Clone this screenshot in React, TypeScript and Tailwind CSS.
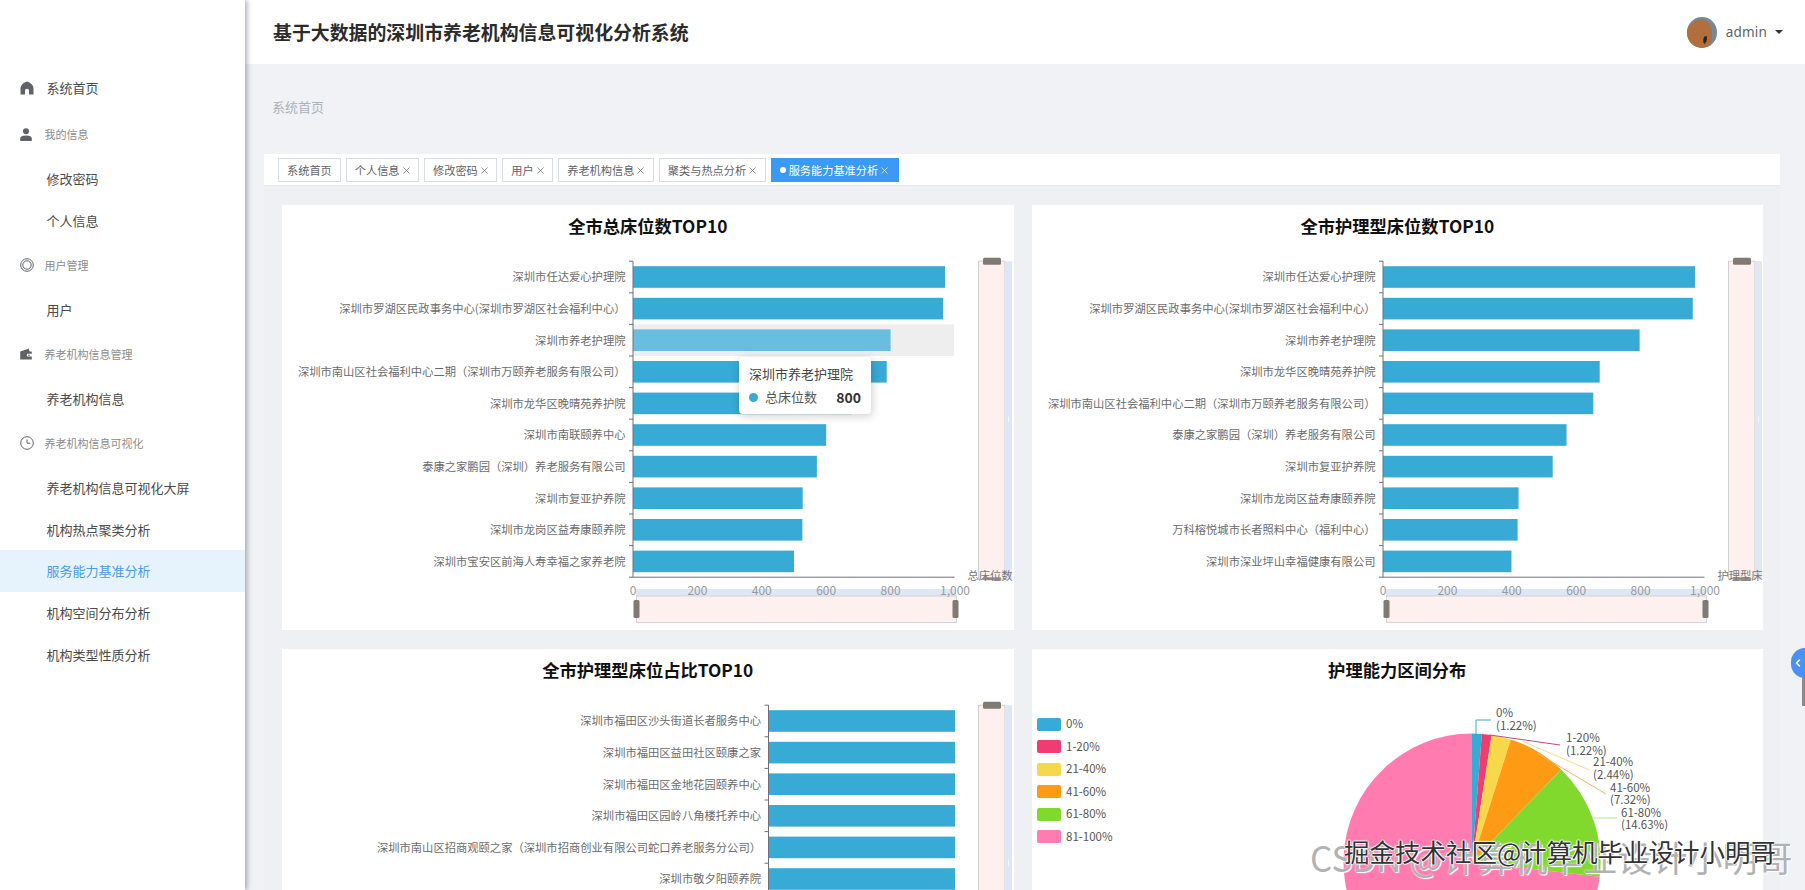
import React from "react";
import { ChevronLeft, X } from "lucide-react";

const AXIS_COLOR = "#6e7079";
const BAR = "#38aad6";

const chartOne: [string, number][] = [
  ["深圳市任达爱心护理院", 969],
  ["深圳市罗湖区民政事务中心(深圳市罗湖区社会福利中心）", 963],
  ["深圳市养老护理院", 800],
  ["深圳市南山区社会福利中心二期（深圳市万颐养老服务有限公司）", 788],
  ["深圳市龙华区晚晴苑养护院", 680],
  ["深圳市南联颐养中心", 600],
  ["泰康之家鹏园（深圳）养老服务有限公司", 571],
  ["深圳市复亚护养院", 527],
  ["深圳市龙岗区益寿康颐养院", 526],
  ["深圳市宝安区前海人寿幸福之家养老院", 500],
];

const chartTwo: [string, number][] = [
  ["深圳市任达爱心护理院", 969],
  ["深圳市罗湖区民政事务中心(深圳市罗湖区社会福利中心）", 962],
  ["深圳市养老护理院", 797],
  ["深圳市龙华区晚晴苑养护院", 673],
  ["深圳市南山区社会福利中心二期（深圳市万颐养老服务有限公司）", 653],
  ["泰康之家鹏园（深圳）养老服务有限公司", 570],
  ["深圳市复亚护养院", 527],
  ["深圳市龙岗区益寿康颐养院", 421],
  ["万科榕悦城市长者照料中心（福利中心）", 418],
  ["深圳市深业坪山幸福健康有限公司", 399],
];

const chartThree: [string, number][] = [
  ["深圳市福田区沙头街道长者服务中心", 1000],
  ["深圳市福田区益田社区颐康之家", 1000],
  ["深圳市福田区金地花园颐养中心", 1000],
  ["深圳市福田区园岭八角楼托养中心", 1000],
  ["深圳市南山区招商观颐之家（深圳市招商创业有限公司蛇口养老服务分公司）", 1000],
  ["深圳市敬夕阳颐养院", 1000],
];

const pieData = [
  { name: "0%", pct: 1.22, color: "#38aad6" },
  { name: "1-20%", pct: 1.22, color: "#f03c70" },
  { name: "21-40%", pct: 2.44, color: "#f6d84a" },
  { name: "41-60%", pct: 7.32, color: "#ff9a14" },
  { name: "61-80%", pct: 14.63, color: "#82d92e" },
  { name: "81-100%", pct: 73.17, color: "#ff7bb0" },
];

function HomeIcon() {
  return (
    <svg width="14" height="14" viewBox="0 0 14 14" className="fill-[#5f6368]">
      <path d="M7 0.5C3.5 1.5 0.8 4 0.5 7.2V13.5H5V9.6C5 8.5 5.9 7.8 7 7.8C8.1 7.8 9 8.5 9 9.6V13.5H13.5V7.2C13.2 4 10.5 1.5 7 0.5Z" />
    </svg>
  );
}

function UserIcon() {
  return (
    <svg width="12" height="13" viewBox="0 0 12 13" className="fill-[#5f6368]">
      <circle cx="6" cy="3.2" r="3" />
      <path d="M0.2 13V10.4C0.2 8.6 2 7.4 6 7.4C10 7.4 11.8 8.6 11.8 10.4V13Z" />
    </svg>
  );
}

function RingIcon() {
  return (
    <svg width="14" height="14" viewBox="0 0 14 14" fill="none" stroke="#5f6368" strokeWidth="1">
      <circle cx="7" cy="7" r="6.3" />
      <circle cx="7" cy="7" r="4.2" />
    </svg>
  );
}

function WalletIcon() {
  return (
    <svg width="12" height="12" viewBox="0 0 12 12" className="fill-[#5f6368]">
      <path d="M0.2 3.4L7.8 1L8.6 0.2L9.6 3.4H11.8V5.8H8.4C7.4 5.8 6.8 6.3 6.8 7.2C6.8 8.1 7.4 8.6 8.4 8.6H11.8V11.4H0.2Z" />
      <circle cx="9" cy="7.2" r="0.8" />
    </svg>
  );
}

function ClockIcon() {
  return (
    <svg width="14" height="14" viewBox="0 0 14 14" fill="none" stroke="#5f6368" strokeWidth="1">
      <circle cx="7" cy="7" r="6.3" />
      <path d="M7 3.4V7.2H10.4" />
    </svg>
  );
}

function Avatar() {
  return (
    <svg width="30" height="31" viewBox="0 0 30 31" className="rounded-full">
      <rect width="30" height="31" fill="#76899a" />
      <path d="M0 13C3 4 12 1 18 3C24 6 25 13 25 20C25 27 21 31 14 31C6 31 0 24 0 16Z" fill="#b26f3e" />
      <path d="M17 20C19 18 20 19 20 21C20 24 19 26 17 27C16 25 16 22 17 20Z" fill="#2e241c" />
    </svg>
  );
}

function NavItem({ label, active }: { label: string; active?: boolean }) {
  return (
    <div className={`h-[41.7px] flex items-center pl-[46.5px] text-[13px] ${active ? "bg-[#e6f3fd] text-[#4a9bea]" : "text-[#4a4a4a]"}`}>
      {label}
    </div>
  );
}

function NavGroup({ icon, label }: { icon: React.ReactNode; label: string }) {
  return (
    <div className="h-[47.3px] flex items-center text-[11px] text-[#8c8c8c]">
      <div className="w-[44.5px] pl-[19.5px] flex items-center">{icon}</div>
      {label}
    </div>
  );
}

function Sidebar() {
  return (
    <aside className="relative z-20 w-[245px] shrink-0 h-full bg-white pt-[65px] shadow-[2px_0_5px_rgba(40,50,70,0.4)]">
      <div className="h-[46px] flex items-center text-[13px] text-[#4a4a4a]">
        <div className="w-[46.5px] pl-[20px] flex items-center"><HomeIcon /></div>
        系统首页
      </div>
      <NavGroup icon={<UserIcon />} label="我的信息" />
      <NavItem label="修改密码" />
      <NavItem label="个人信息" />
      <NavGroup icon={<RingIcon />} label="用户管理" />
      <NavItem label="用户" />
      <NavGroup icon={<WalletIcon />} label="养老机构信息管理" />
      <NavItem label="养老机构信息" />
      <NavGroup icon={<ClockIcon />} label="养老机构信息可视化" />
      <NavItem label="养老机构信息可视化大屏" />
      <NavItem label="机构热点聚类分析" />
      <NavItem label="服务能力基准分析" active />
      <NavItem label="机构空间分布分析" />
      <NavItem label="机构类型性质分析" />
    </aside>
  );
}

function Tab({ label, closable = true, active }: { label: string; closable?: boolean; active?: boolean }) {
  return (
    <div className={`h-6 pl-2 flex items-center border text-[11.2px] ${closable && !active ? "pr-[6.5px]" : "pr-2"} ${active ? "bg-[#3a9bf7] border-[#3a9bf7] text-white" : "bg-white border-[#d8dce5] text-[#5f6368]"}`}>
      {active && <span className="w-[6px] h-[6px] rounded-full bg-white mr-[3px]" />}
      {label}
      {closable && <X size={11} strokeWidth={1.5} className="ml-[1px]" />}
    </div>
  );
}

function BarChart({ data, axisX, slider, hover, axisName }: { data: [string, number][]; axisX: number; slider?: boolean; hover?: number; axisName?: string }) {
  const top = 14.2;
  const step = 31.6;
  const bottom = top + step * 10;
  const scale = (673 - axisX) / 1000;
  return (
    <svg width="731" height="383" className="block text-[11.3px]">
      {hover !== undefined && (
        <rect x={axisX} y={top + step * hover} width={672 - axisX} height={step} fill="#eeeeee" />
      )}
      {data.map(([name, value], i) => {
        const cy = top + step * i + step / 2;
        return (
          <g key={name}>
            <line x1={axisX - 4} x2={axisX} y1={top + step * i} y2={top + step * i} stroke={AXIS_COLOR} />
            <rect x={axisX} y={cy - 10.8} width={value * scale} height={21.6} fill={hover === i ? "#68bde0" : BAR} />
            <text x={axisX - 7.5} y={cy - 0.7} textAnchor="end" dominantBaseline="central" className="fill-[#6b6b6b]">{name}</text>
          </g>
        );
      })}
      <line x1={axisX} x2={axisX} y1={top} y2={bottom} stroke={AXIS_COLOR} />
      <line x1={axisX - 4} x2={672.5} y1={bottom} y2={bottom} stroke={AXIS_COLOR} />
      <rect x="696.5" y={top} width="26.5" height="318" fill="#fdf0ef" stroke="#cfcfcf" />
      <rect x="723" y={top} width="7" height="318" fill="#dfe6f5" />
      <circle cx="726.5" cy={top + 156} r="0.7" fill="#fff" />
      <circle cx="726.5" cy={top + 158} r="0.7" fill="#fff" />
      <circle cx="726.5" cy={top + 160} r="0.7" fill="#fff" />
      <rect x="701" y={top - 3.5} width="18" height="7" rx="1.5" fill="#7f7a72" />
      {slider && axisName && (
        <>
          <text x="708" y={bottom - 2} textAnchor="middle" dominantBaseline="central" className="fill-[#777777]">{axisName}</text>
          <rect x="701" y={bottom} width="18" height="3" rx="1" fill="#7f7a72" opacity="0.8" />
        </>
      )}
      {slider && (
        <>
          <rect x={axisX + 3} y="342" width="320" height="7" fill="#dfe6f5" />
          <rect x={axisX + 3.5} y="349" width="320" height="26.5" fill="#fdf0ef" stroke="#cfd3da" />
          <rect x={axisX + 0.5} y="353" width="6" height="18" rx="1.5" fill="#7f7a72" />
          <rect x={axisX + 319.5} y="353" width="6" height="18" rx="1.5" fill="#7f7a72" />
          {[0, 200, 400, 600, 800, 1000].map((v) => (
            <text key={v} x={axisX + v * scale} y="342" textAnchor="middle" dominantBaseline="central" className="fill-[#9a9a9a] text-[12px]">
              {v === 1000 ? "1,000" : v}
            </text>
          ))}
        </>
      )}
    </svg>
  );
}

function Tooltip() {
  return (
    <div className="absolute left-[457px] top-[152px] w-[132px] h-[57px] bg-white rounded shadow-[1px_2px_10px_rgba(0,0,0,0.2)] px-[10px] pt-[8px]">
      <div className="text-[13px] leading-[18px] text-[#444]">深圳市养老护理院</div>
      <div className="flex items-center mt-[5px] text-[13px] leading-[18px] text-[#555]">
        <span className="w-[9px] h-[9px] rounded-full bg-[#38aad6] mr-[7px]" />
        总床位数
        <span className="ml-auto font-bold text-[14px] text-[#333]">800</span>
      </div>
    </div>
  );
}

function Card({ title, children }: { title: string; children: React.ReactNode }) {
  return (
    <div className="relative bg-white h-[425px] overflow-hidden">
      <h2 className="h-[42px] flex items-center justify-center text-[17.3px] font-bold text-[#111]">{title}</h2>
      {children}
    </div>
  );
}

function PieChart() {
  const cx = 1471 - 1031;
  const cy = 862 - 691;
  const r = 128.5;
  let start = 0;
  const slices = pieData.map((d) => {
    const a0 = (start / 100) * Math.PI * 2;
    start += d.pct;
    const a1 = (start / 100) * Math.PI * 2;
    const large = d.pct > 50 ? 1 : 0;
    const p = `M${cx} ${cy}L${cx + r * Math.sin(a0)} ${cy - r * Math.cos(a0)}A${r} ${r} 0 ${large} 1 ${cx + r * Math.sin(a1)} ${cy - r * Math.cos(a1)}Z`;
    return <path key={d.name} d={p} fill={d.color} />;
  });
  const labels = [
    { a: "0%", b: "(1.22%)", x: 464, y: 21, c: "#38aad6", line: "444,43 444,29 459,29" },
    { a: "1-20%", b: "(1.22%)", x: 534, y: 46, c: "#c24a78", line: "458,44 528,54" },
    { a: "21-40%", b: "(2.44%)", x: 561, y: 70, c: "#f3e08a", line: "490,50 557.5,79" },
    { a: "41-60%", b: "(7.32%)", x: 578, y: 95.5, c: "#f5b26a", line: "505,62 574,103" },
    { a: "61-80%", b: "(14.63%)", x: 589, y: 120.5, c: "#b4e58a", line: "560,127 585,127" },
  ];
  return (
    <svg width="731" height="383" className="block text-[11.5px]">
      {slices}
      {labels.map((l) => (
        <g key={l.a}>
          <polyline points={l.line} fill="none" stroke={l.c} />
          <text x={l.x} y={l.y} dominantBaseline="central" className="fill-[#555555]">{l.a}</text>
          <text x={l.x} y={l.y + 12.5} dominantBaseline="central" className="fill-[#555555]">{l.b}</text>
        </g>
      ))}
    </svg>
  );
}

function PieLegend() {
  return (
    <div className="absolute left-[5.5px] top-[68.5px] flex flex-col gap-[9.5px]">
      {pieData.map((d) => (
        <div key={d.name} className="h-[13px] flex items-center text-[11.5px] text-[#555]">
          <span className="w-6 h-[13px] rounded-[2px] mr-[5px]" style={{ backgroundColor: d.color }} />
          {d.name}
        </div>
      ))}
    </div>
  );
}

export default function App() {
  return (
    <div className="relative flex h-screen w-full overflow-hidden bg-[#f1f2f5] font-['Noto_Sans_CJK_SC','Noto_Sans',sans-serif]">
      <Sidebar />
      <main className="flex-1 min-w-0 flex flex-col">
        <header className="relative z-10 h-16 shrink-0 bg-white flex items-center pl-[28px] pr-[22px]">
          <h1 className="text-[18.9px] font-bold text-[#2b2b2b]">基于大数据的深圳市养老机构信息可视化分析系统</h1>
          <div className="ml-auto flex items-center">
            <Avatar />
            <span className="ml-[9px] text-[13.5px] tracking-[0.2px] text-[#606266] font-['Noto_Sans',sans-serif]">admin</span>
            <span className="ml-2 w-0 h-0 border-x-[4px] border-x-transparent border-t-[4px] border-t-[#333]" />
          </div>
        </header>
        <div className="h-[90px] shrink-0 flex items-center pl-[27px] pb-[5px] text-[13px] text-[#aab2bf]">系统首页</div>
        <div className="ml-[18.5px] mr-[25px] flex-1 min-h-0 flex flex-col">
          <div className="h-[32px] shrink-0 bg-white flex items-center gap-[5px] pl-[14.5px] pt-[1px] border-b border-[#e6e8ec]">
            <Tab label="系统首页" closable={false} />
            <Tab label="个人信息" />
            <Tab label="修改密码" />
            <Tab label="用户" />
            <Tab label="养老机构信息" />
            <Tab label="聚类与热点分析" />
            <Tab label="服务能力基准分析" active />
          </div>
          <div className="flex-1 bg-[#eef0f3] grid grid-cols-2 gap-x-[18px] gap-y-[19px] pl-[18.5px] pr-[17px] pt-[19px] content-start">
            <Card title="全市总床位数TOP10">
              <BarChart data={chartOne} axisX={351} slider hover={2} axisName="总床位数" />
              <Tooltip />
            </Card>
            <Card title="全市护理型床位数TOP10">
              <BarChart data={chartTwo} axisX={351} slider axisName="护理型床" />
            </Card>
            <Card title="全市护理型床位占比TOP10">
              <BarChart data={chartThree} axisX={486.5} />
            </Card>
            <Card title="护理能力区间分布">
              <PieLegend />
              <PieChart />
            </Card>
          </div>
        </div>
      </main>
      <div className="absolute right-0 top-[650px] w-[3px] h-[56px] bg-[#8a8a8a]" />
      <div className="absolute right-0 top-[648px] w-[14px] h-[30px] rounded-l-full bg-[#4a90f5] flex items-center pl-[1px] text-white">
        <ChevronLeft size={12} strokeWidth={3} />
      </div>
      <div className="absolute left-[1310px] top-[833px] whitespace-nowrap text-[35px] leading-[48px] text-[#8f8f8f]/70 [text-shadow:0_0_2px_#ffffff,1px_1px_1px_#ffffff]">CSDN @计算机毕业设计小明哥</div>
      <div className="absolute left-[1344px] top-[833px] whitespace-nowrap text-[25.5px] leading-[36px] text-[#333] [text-shadow:1px_0_1px_#ffffff,-1px_0_1px_#ffffff,0_1px_1px_#ffffff,0_-1px_1px_#ffffff]">掘金技术社区@计算机毕业设计小明哥</div>
    </div>
  );
}
